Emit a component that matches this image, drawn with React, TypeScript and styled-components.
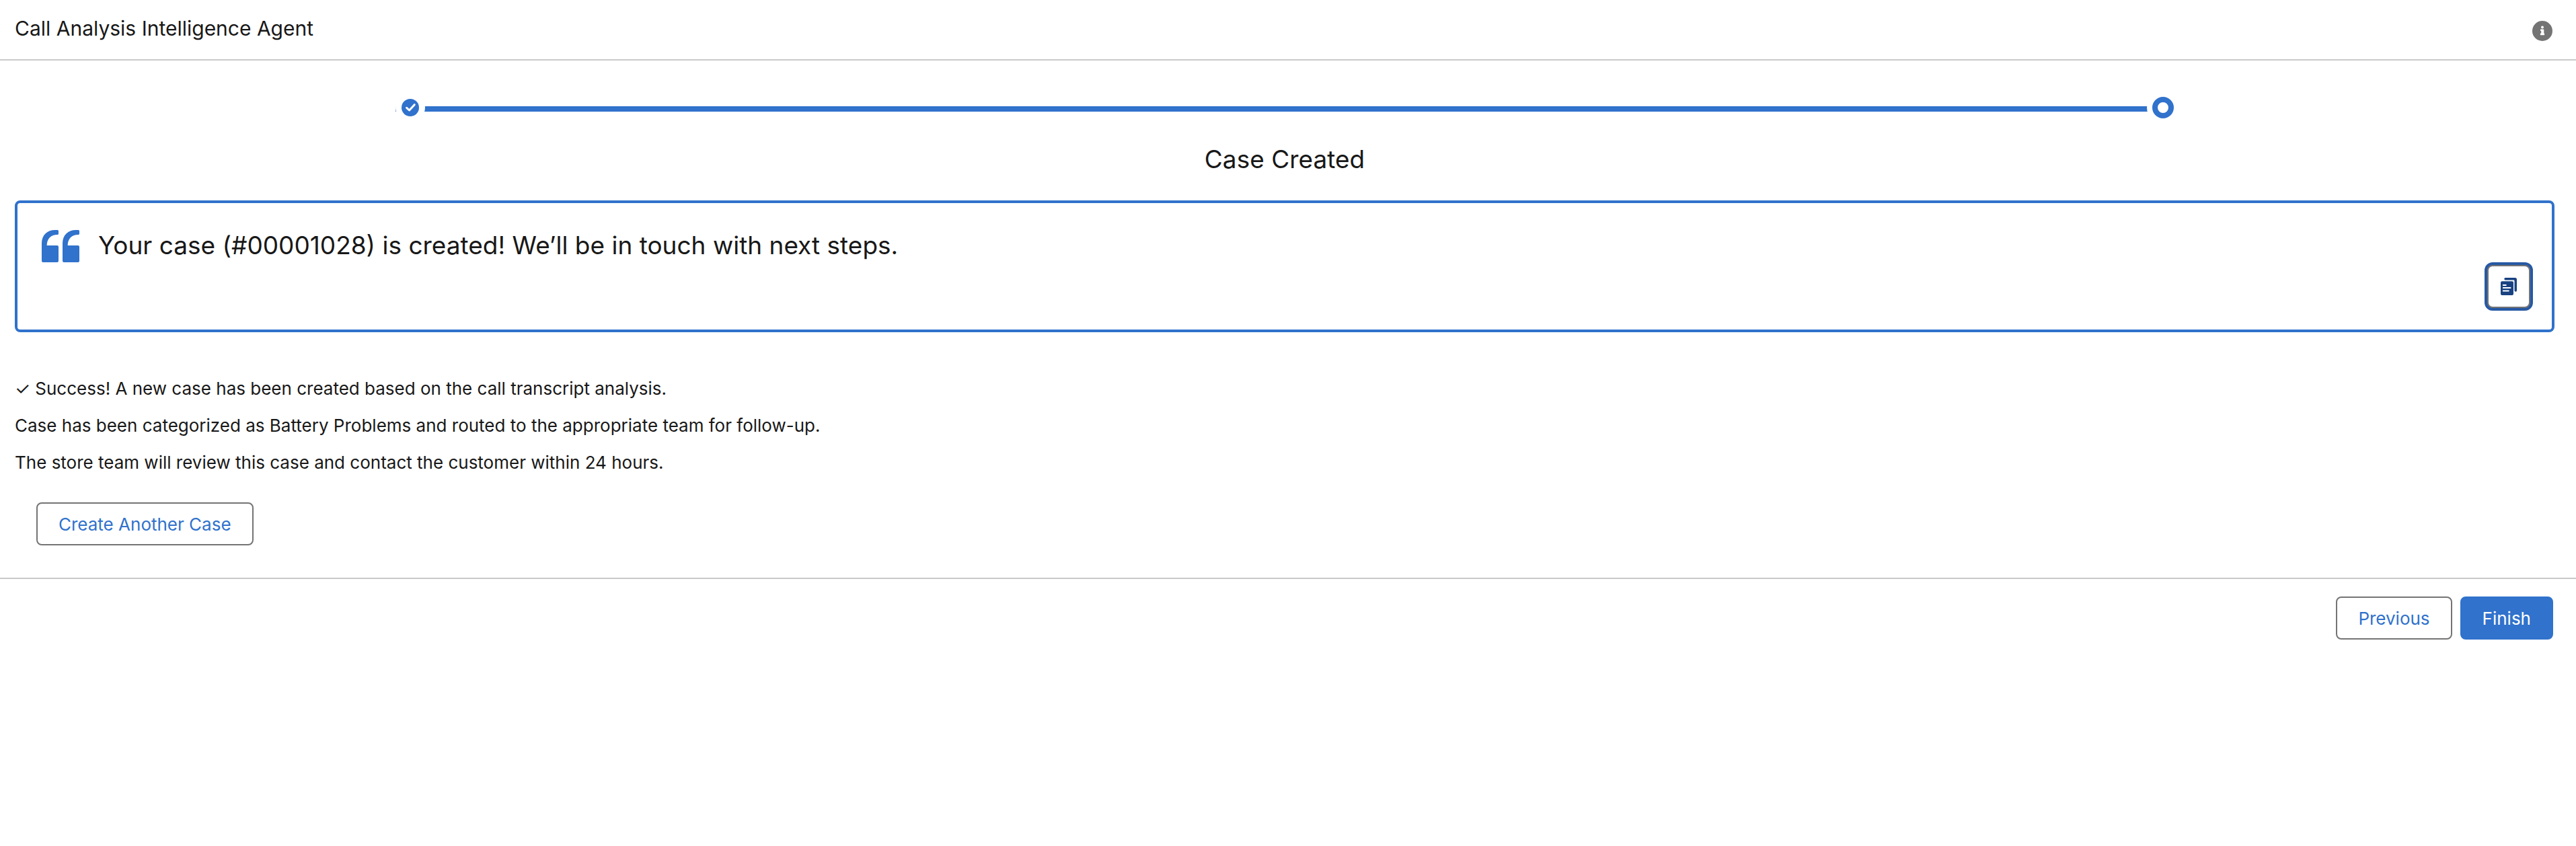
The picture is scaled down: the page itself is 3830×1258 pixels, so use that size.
import React from "react";
import styled, { createGlobalStyle } from "styled-components";

const color = {
  brand: "#3072cc",
  brandDark: "#194281",
  focus: "#2759a5",
  text: "#181818",
  border: "#747474",
  rule: "#c9c9c9",
};

const GlobalStyle = createGlobalStyle`
  * { box-sizing: border-box; }
  body {
    margin: 0;
    background: #fff;
    color: ${color.text};
    font-family: Inter, "Liberation Sans", sans-serif;
    font-size: 26px;
    line-height: 39px;
  }
`;

const Header = styled.header`
  display: flex;
  align-items: center;
  justify-content: space-between;
  height: 90px;
  padding: 0 35px 4px 22px;
  border-bottom: 2px solid ${color.rule};
`;

const Title = styled.h1`
  margin: 0;
  font-size: 30px;
  font-weight: 400;
  line-height: 48px;
`;

const IconButton = styled.button`
  display: flex;
  margin: 8px 0 0;
  padding: 0;
  border: 0;
  background: none;
`;

const StepperArea = styled.nav`
  padding: 54px 24px 0 20px;
`;

const Track = styled.div`
  display: grid;
  align-items: center;
  width: 70%;
  margin: 0 auto;
`;

const Bar = styled.div`
  grid-area: 1 / 1;
  height: 8px;
  margin-top: 4px;
  background: ${color.brand};
`;

const Steps = styled.ol`
  grid-area: 1 / 1;
  display: flex;
  align-items: center;
  justify-content: space-between;
  margin: 0;
  padding: 0 6px 0 9px;
  list-style: none;
`;

const Step = styled.li<{ $current?: boolean }>`
  display: flex;
  align-items: center;
  justify-content: center;
  width: ${(p) => (p.$current ? 32 : 26)}px;
  height: ${(p) => (p.$current ? 32 : 26)}px;
  border: ${(p) => (p.$current ? `8px solid ${color.brand}` : "0")};
  border-radius: 50%;
  background: ${(p) => (p.$current ? "#fff" : color.brand)};
  box-shadow: 0 0 0 ${(p) => (p.$current ? 8 : 9)}px #fff;
`;

const Main = styled.main`
  padding: 36px 32px 48px 22px;
`;

const Heading = styled.h2`
  margin: 0 0 36px;
  font-size: 37px;
  font-weight: 400;
  line-height: 50px;
  text-align: center;
`;

const Card = styled.section`
  padding: 40px 32px 32px 36px;
  border: 4px solid ${color.brand};
  border-radius: 8px;
`;

const Quote = styled.div`
  display: flex;
  align-items: flex-start;
  gap: 28px;
`;

const QuoteText = styled.p`
  margin: 0;
  font-size: 37px;
  line-height: 46px;
`;

const CardActions = styled.div`
  display: flex;
  justify-content: flex-end;
  margin-top: 4px;
`;

const CopyButton = styled.button`
  display: flex;
  align-items: center;
  justify-content: center;
  width: 64px;
  height: 64px;
  padding: 0;
  border: 2px solid ${color.border};
  border-radius: 8px;
  background: #fff;
  box-shadow: 0 0 0 4px ${color.focus};
`;

const Details = styled.div`
  display: flex;
  flex-direction: column;
  gap: 16px;
  margin: 64px 0 40px;
`;

const Line = styled.p`
  margin: 0;
`;

const BodyActions = styled.div`
  display: flex;
  padding-left: 32px;
`;

const Button = styled.button<{ $primary?: boolean }>`
  height: 64px;
  padding: 0 31px;
  border: 2px solid ${(p) => (p.$primary ? color.brand : color.border)};
  border-radius: 8px;
  background: ${(p) => (p.$primary ? color.brand : "#fff")};
  color: ${(p) => (p.$primary ? "#fff" : color.brand)};
  font: inherit;
`;

const Footer = styled.footer`
  display: flex;
  justify-content: flex-end;
  gap: 12px;
  padding: 26px 34px 26px 22px;
  border-top: 2px solid ${color.rule};
`;

const InfoIcon = () => (
  <svg width="30" height="30" viewBox="0 0 30 30" aria-hidden="true">
    <circle cx="15" cy="15" r="15" fill={color.border} />
    <circle cx="15" cy="9.5" r="2" fill="#fff" />
    <path
      d="M12.600 12.500h3.900c.5 0 .8.3.8.8v5.200h.2c.4 0 .6.3.6.6v1.500c0 .4-.2.6-.6.6h-5c-.4 0-.6-.2-.6-.6v-1.500c0-.3.2-.6.6-.6h.7v-3.600h-.6c-.4 0-.6-.3-.6-.6v-1.200c0-.4.200-.6.6-.6z"
      fill="#fff"
    />
  </svg>
);

const CheckIcon = () => (
  <svg width="26" height="26" viewBox="0 0 26 26" aria-hidden="true">
    <path d="M7.600 13.300l4 3.700 7.600-8.300" fill="none" stroke="#fff" strokeWidth="3" strokeLinecap="round" strokeLinejoin="round" />
  </svg>
);

const QuoteIcon = () => (
  <svg width="56" height="48" viewBox="0 0 56 48" fill={color.brand} aria-hidden="true">
    <path d="M22.500 0H23.500Q25 0 25 1.500V5.500Q25 7 23.300 7C14 7 8 12.500 7.600 23H23Q25 23 25 25V46Q25 48 23 48H2Q0 48 0 46V20C0 7 8.500 0 20 0z" />
    <path d="M53.500 0H54.500Q56 0 56 1.500V5.500Q56 7 54.300 7C45 7 39 12.500 38.600 23H54Q56 23 56 25V46Q56 48 54 48H33Q31 48 31 46V20C31 7 39.500 0 51 0z" />
  </svg>
);

const CopyIcon = () => (
  <svg width="24" height="26" viewBox="0 0 24 26" aria-hidden="true">
    <path d="M7 0H21.500Q24 0 24 2.500V19Q24 20.700 22.300 20.700Q20.500 20.700 20.500 19V4.500Q20.500 3.500 19.500 3.500H7Q5.300 3.500 5.300 1.750Q5.300 0 7 0z" fill={color.brandDark} />
    <rect x="0" y="5.300" width="19" height="20.700" rx="2" fill={color.brandDark} />
    <path d="M3.800 11h4M3.800 15h10.700M3.800 19.500h8" stroke="#fff" strokeWidth="2" strokeLinecap="round" />
  </svg>
);

export default function App() {
  return (
    <>
      <GlobalStyle />
      <Header>
        <Title>Call Analysis Intelligence Agent</Title>
        <IconButton type="button" aria-label="Information">
          <InfoIcon />
        </IconButton>
      </Header>
      <StepperArea aria-label="Progress">
        <Track>
          <Bar />
          <Steps>
            <Step>
              <CheckIcon />
            </Step>
            <Step $current aria-current="step" />
          </Steps>
        </Track>
      </StepperArea>
      <Main>
        <Heading>Case Created</Heading>
        <Card>
          <Quote>
            <QuoteIcon />
            <QuoteText>Your case (#00001028) is created! We’ll be in touch with next steps.</QuoteText>
          </Quote>
          <CardActions>
            <CopyButton type="button" aria-label="Copy">
              <CopyIcon />
            </CopyButton>
          </CardActions>
        </Card>
        <Details>
          <Line>✓ Success! A new case has been created based on the call transcript analysis.</Line>
          <Line>Case has been categorized as Battery Problems and routed to the appropriate team for follow-up.</Line>
          <Line>The store team will review this case and contact the customer within 24 hours.</Line>
        </Details>
        <BodyActions>
          <Button type="button">Create Another Case</Button>
        </BodyActions>
      </Main>
      <Footer>
        <Button type="button">Previous</Button>
        <Button type="button" $primary>
          Finish
        </Button>
      </Footer>
    </>
  );
}
